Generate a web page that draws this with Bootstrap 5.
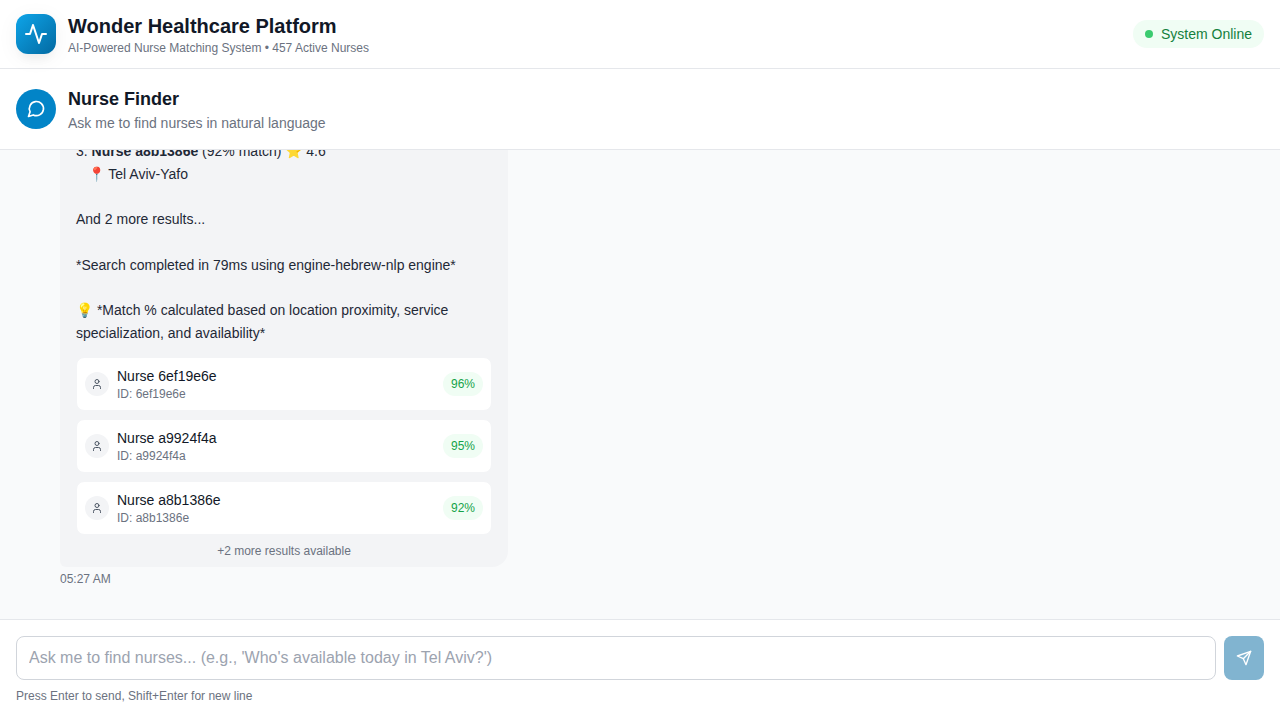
<!DOCTYPE html>
<html lang="en">
<head>
<meta charset="utf-8">
<meta name="viewport" content="width=device-width, initial-scale=1">
<title>Wonder Healthcare Platform</title>
<link href="https://cdn.jsdelivr.net/npm/bootstrap@5.3.0/dist/css/bootstrap.min.css" rel="stylesheet">
<style>
  body { font-family: "Liberation Sans", Arial, sans-serif; font-size: 14px; line-height: 20px; color: #111827; }
  svg { fill: none; stroke: currentColor; stroke-width: 2; stroke-linecap: round; stroke-linejoin: round; flex: none; }
  .line-b { border-bottom: 1px solid #e5e7eb; }
  .line-t { border-top: 1px solid #e5e7eb; }
  .tile { width: 40px; height: 40px; color: #fff; }
  .tile-logo { border-radius: 12px; background: linear-gradient(135deg, #0ea5e9, #0369a1); box-shadow: 0 4px 25px -5px rgba(0,0,0,.1), 0 10px 10px -5px rgba(0,0,0,.04); }
  .tile-chat { background: #0284c7; }
  .title-lg { font-size: 20px; line-height: 28px; font-weight: 700; }
  .title-md { font-size: 18px; line-height: 28px; font-weight: 600; }
  .tiny { font-size: 12px; line-height: 16px; }
  .muted { color: #6b7280; }
  .status { background: #f0fdf4; color: #15803d; padding: 4px 12px; }
  .status-dot { width: 8px; height: 8px; background: #3bcb6f; }
  .thread { background: #f9fafb; padding: 0 16px 32px 60px; min-height: 0; }
  .bubble { width: 448px; background: #f3f4f6; color: #1f2937; padding: 8px 16px; border-radius: 16px 16px 16px 6px; }
  .message-text { white-space: pre-wrap; line-height: 22.75px; margin-bottom: 12.35px; }
  .nurse { background: #fff; border: 1px solid #f3f4f6; border-radius: 8px; padding: 8px; color: #111827; }
  .avatar { width: 24px; height: 24px; background: #f3f4f6; color: #4b5563; }
  .nurse-name { line-height: 20px; }
  .match { background: #f0fdf4; color: #16a34a; padding: 4px 8px; }
  .ask { height: 44px; border: 1px solid #d1d5db; border-radius: 8px; padding: 8px 12px; font-size: 16px; line-height: 24px; }
  .ask::placeholder { color: #9ca3af; }
  .send { width: 40px; height: 44px; border: 0; padding: 0; border-radius: 8px; background: #81b4d0; color: #fff; }
</style>
</head>
<body class="vh-100 d-flex flex-column overflow-hidden bg-white">
  <header class="line-b d-flex align-items-center justify-content-between px-3 py-2">
    <div class="d-flex align-items-center gap-2 py-1">
      <div class="tile tile-logo d-flex align-items-center justify-content-center me-1">
        <svg width="24" height="24" viewBox="0 0 24 24"><polyline points="22 12 18 12 15 21 9 3 6 12 2 12"/></svg>
      </div>
      <div>
        <h1 class="title-lg mb-0">Wonder Healthcare Platform</h1>
        <p class="tiny muted mb-0">AI-Powered Nurse Matching System • 457 Active Nurses</p>
      </div>
    </div>
    <div class="status rounded-pill d-flex align-items-center gap-2">
      <span class="status-dot rounded-circle"></span>
      <span>System Online</span>
    </div>
  </header>

  <section class="line-b d-flex align-items-center gap-2 p-3">
    <div class="tile tile-chat rounded-circle d-flex align-items-center justify-content-center me-1">
      <svg width="20" height="20" viewBox="0 0 24 24"><path d="m3 21 1.9-5.7a8.5 8.5 0 1 1 3.8 3.8z"/></svg>
    </div>
    <div>
      <h2 class="title-md mb-0">Nurse Finder</h2>
      <p class="muted mb-0">Ask me to find nurses in natural language</p>
    </div>
  </section>

  <main class="thread flex-grow-1 d-flex flex-column justify-content-end overflow-hidden">
    <div class="bubble">
      <div class="message-text">3. <strong>Nurse a8b1386e</strong> (92% match) ⭐ 4.6
   📍 Tel Aviv-Yafo

And 2 more results...

*Search completed in 79ms using engine-hebrew-nlp engine*

💡 *Match % calculated based on location proximity, service specialization, and availability*</div>
      <div class="d-flex flex-column gap-2">
        <div class="nurse d-flex align-items-center gap-2">
          <span class="avatar rounded-circle d-flex align-items-center justify-content-center"><svg width="12" height="12" viewBox="0 0 24 24"><path d="M19 21v-2a4 4 0 0 0-4-4H9a4 4 0 0 0-4 4v2"/><circle cx="12" cy="7" r="4"/></svg></span>
          <div class="flex-grow-1"><div class="nurse-name">Nurse 6ef19e6e</div><div class="tiny muted">ID: 6ef19e6e</div></div>
          <span class="match tiny rounded-pill">96%</span>
        </div>
        <div class="nurse d-flex align-items-center gap-2">
          <span class="avatar rounded-circle d-flex align-items-center justify-content-center"><svg width="12" height="12" viewBox="0 0 24 24"><path d="M19 21v-2a4 4 0 0 0-4-4H9a4 4 0 0 0-4 4v2"/><circle cx="12" cy="7" r="4"/></svg></span>
          <div class="flex-grow-1"><div class="nurse-name">Nurse a9924f4a</div><div class="tiny muted">ID: a9924f4a</div></div>
          <span class="match tiny rounded-pill">95%</span>
        </div>
        <div class="nurse d-flex align-items-center gap-2">
          <span class="avatar rounded-circle d-flex align-items-center justify-content-center"><svg width="12" height="12" viewBox="0 0 24 24"><path d="M19 21v-2a4 4 0 0 0-4-4H9a4 4 0 0 0-4 4v2"/><circle cx="12" cy="7" r="4"/></svg></span>
          <div class="flex-grow-1"><div class="nurse-name">Nurse a8b1386e</div><div class="tiny muted">ID: a8b1386e</div></div>
          <span class="match tiny rounded-pill">92%</span>
        </div>
        <div class="tiny muted text-center">+2 more results available</div>
      </div>
    </div>
    <time class="tiny muted mt-1">05:27 AM</time>
  </main>

  <footer class="line-t p-3">
    <div class="d-flex gap-2 mb-2">
      <input class="ask form-control" type="text" placeholder="Ask me to find nurses... (e.g., 'Who's available today in Tel Aviv?')">
      <button class="send d-flex align-items-center justify-content-center flex-shrink-0" type="button" aria-label="Send">
        <svg width="16" height="16" viewBox="0 0 24 24"><path d="m22 2-7 20-4-9-9-4Z"/><path d="M22 2 11 13"/></svg>
      </button>
    </div>
    <p class="tiny muted mb-0">Press Enter to send, Shift+Enter for new line</p>
  </footer>
  <script src="https://cdn.jsdelivr.net/npm/bootstrap@5.3.0/dist/js/bootstrap.bundle.min.js"></script>
</body>
</html>
